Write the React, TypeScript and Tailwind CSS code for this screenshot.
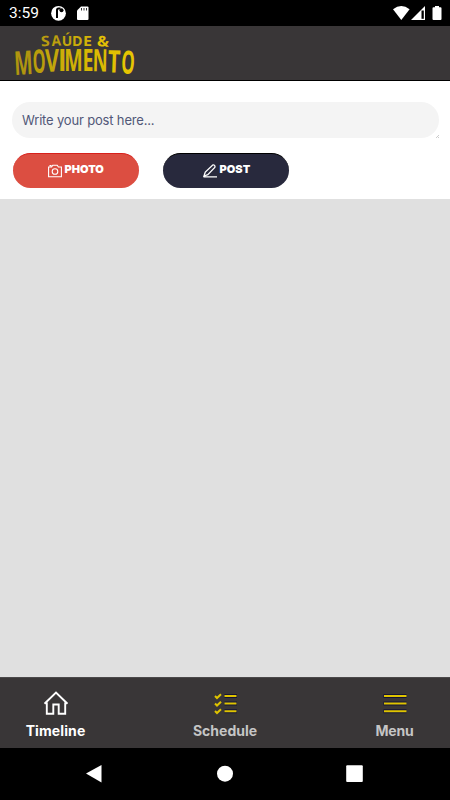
import React from 'react'

interface LogoLetter {
  char: string
  x: number
  y: number
  width: number
  size: number
  rotate: number
  color: string
}

const topLetters: LogoLetter[] = [
  { char: 'S', x: 41.3, y: 46.5, width: 8.8, size: 14.5, rotate: -4, color: '#b99c10' },
  { char: 'A', x: 51.8, y: 46, width: 9.5, size: 14.5, rotate: -3, color: '#bda00e' },
  { char: 'Ú', x: 61.8, y: 45.7, width: 10.5, size: 14.5, rotate: 0, color: '#c5a70c' },
  { char: 'D', x: 72, y: 45.5, width: 10.5, size: 14.5, rotate: 0, color: '#cbac0a' },
  { char: 'E', x: 83, y: 45.5, width: 9, size: 14.5, rotate: 0, color: '#d2b208' },
  { char: '&', x: 96.8, y: 46, width: 12, size: 14.5, rotate: 4, color: '#e2c005' },
]

const bottomLetters: LogoLetter[] = [
  { char: 'M', x: 14.8, y: 75, width: 18.5, size: 33, rotate: -3, color: '#b0950f' },
  { char: 'O', x: 33, y: 73, width: 13, size: 32.5, rotate: -2, color: '#b99d0c' },
  { char: 'V', x: 45.3, y: 71.8, width: 14, size: 31.5, rotate: -1, color: '#c3a60a' },
  { char: 'I', x: 58, y: 71, width: 8.5, size: 31, rotate: 0, color: '#ccad08' },
  { char: 'M', x: 64.3, y: 70.8, width: 18.5, size: 30.5, rotate: 0, color: '#d0b106' },
  { char: 'E', x: 82.5, y: 70.8, width: 11, size: 30.5, rotate: 0, color: '#d7b704' },
  { char: 'N', x: 92.5, y: 71.3, width: 15, size: 31, rotate: 1, color: '#dbbb03' },
  { char: 'T', x: 107.5, y: 72.2, width: 12.5, size: 31, rotate: 2, color: '#e1c002' },
  { char: 'O', x: 120.7, y: 73.2, width: 13.5, size: 32, rotate: 3, color: '#e6c502' },
]

function Letter({ char, x, y, width, size, rotate, color }: LogoLetter) {
  return (
    <text
      transform={`translate(${x} ${y}) rotate(${rotate})`}
      fontSize={size}
      textLength={width}
      lengthAdjust="spacingAndGlyphs"
      fill={color}
    >
      {char}
    </text>
  )
}

function Logo() {
  return (
    <svg className="h-[54px] w-[140px] overflow-visible" viewBox="0 26 140 54">
      <g fontFamily="Open Sans, sans-serif" fontWeight="700">
        {topLetters.map((letter) => (
          <Letter key={letter.x} {...letter} />
        ))}
        {bottomLetters.map((letter) => (
          <Letter key={letter.x} {...letter} />
        ))}
      </g>
    </svg>
  )
}

function StatusBar() {
  return (
    <div className="flex h-[26px] shrink-0 items-center bg-black pl-[9px] text-white">
      <span className="w-[42px] pt-0.5 font-[Roboto] text-[15.5px] leading-none">3:59</span>
      <svg className="h-[26px] w-10" viewBox="51 0 40 26">
        <circle cx="58.5" cy="13.3" r="7.4" fill="#fff" />
        <path d="M57 18V10q0-1.500 1.500-1.500h2" fill="none" stroke="#000" strokeWidth="2" />
        <circle cx="61.5" cy="10.3" r="2" fill="#000" />
        <path d="M81 6.500h6.500a1 1 0 0 1 1 1V19a1 1 0 0 1-1 1H78a1 1 0 0 1-1-1v-8.500z" fill="#fff" />
        <path d="M81.500 8v2.500M84 8v2.500M86.500 8v2.500" stroke="#000" strokeWidth="0.8" />
      </svg>
      <svg className="ml-auto h-[26px] w-[60px]" viewBox="390 0 60 26" fill="#fff">
        <path d="M393 9.300q8.300-6.500 16.600 0L401.300 20z" />
        <path d="M425 6v14h-14z" />
        <path d="M421.500 10.500h2.300v8.300h-2.300z" fill="#000" />
        <path d="M435 6h4v1.300h1.500a1 1 0 0 1 1 1V19a1 1 0 0 1-1 1h-7a1 1 0 0 1-1-1V8.300a1 1 0 0 1 1-1H435z" />
      </svg>
    </div>
  )
}

function PostForm() {
  return (
    <div className="h-[118px] shrink-0 bg-white px-3 pt-[21px]">
      <div className="relative mr-[-1px] flex h-9 items-center rounded-full bg-[#f4f4f4] pl-2.5">
        <span className="pt-px text-[13px] tracking-[-0.17px] text-[#515878]">Write your post here...</span>
        <svg className="absolute right-0 bottom-0 size-1" viewBox="0 0 4 4">
          <path d="M1 4L4 1M3 4l1-1" stroke="#999" strokeWidth="0.5" />
        </svg>
      </div>
      <div className="mt-[15px] ml-px flex gap-6">
        <button className="flex h-[35px] w-[126.4px] items-center justify-center gap-[3px] rounded-full border-t border-[#d8201b] bg-[#dc4e41] pr-px pb-[3px] text-[11px] font-black text-white">
          <svg className="mt-0.5 size-3.5" viewBox="0 0 14 14" fill="none" stroke="currentColor" strokeWidth="1.1">
            <path d="M.6 3h3L4.800 1.200h4.400l1.200 1.800h3v9.700H.6zM1.500 1.600h2" />
            <circle cx="7" cy="7.500" r="2.800" />
          </svg>
          PHOTO
        </button>
        <button className="flex h-[35px] w-[126px] items-center justify-center gap-[3px] rounded-full border-t border-black bg-[#28293d] pb-[3px] text-[11px] font-black text-white">
          <svg className="mt-0.5 size-3.5" viewBox="0 0 14 14" fill="none" stroke="currentColor" strokeWidth="1.3">
            <path d="M.5 12.800H14M1 12l1.300-4L9.500 1.200q1.200-.6 2 .2t.3 2L4.800 10.600z" />
          </svg>
          POST
        </button>
      </div>
    </div>
  )
}

function TabBar() {
  return (
    <div className="flex h-[71px] shrink-0 justify-between border-t border-[#4b494a] bg-[#393637] text-[14px] font-bold text-[#c5c5c5]">
      <div className="flex w-[111px] flex-col items-center pt-3 text-white">
        <svg className="h-[27px] w-[26px]" viewBox="0 0 26 27" fill="none" stroke="currentColor" strokeWidth="1.9">
          <path d="M1.500 13.800L13 2.500l11.500 11.300M3.800 12.500V23.700h6.500V14.500h5.400v9.200H22.200V12.500" />
        </svg>
        <span className="mt-1 leading-5 tracking-[0.1px]">Timeline</span>
      </div>
      <div className="flex w-[111px] flex-col items-center pt-3">
        <svg className="h-[27px] w-6" viewBox="0 0 24 27" fill="none" stroke="#dfc400" strokeWidth="2">
          <path d="M11.500 6h12.500M11.500 13.600h12.500M11.500 21.200h12.500" stroke="#151536" strokeWidth="4" />
          <path d="M2 6l2 2L8 4.200M2 13.500l2 2 4-3.800M2 21l2 2 4-3.800M11.500 6h12M11.500 13.600h12M11.500 21.200h12" />
        </svg>
        <span className="mt-1 leading-5">Schedule</span>
      </div>
      <div className="flex w-[111px] flex-col items-center pt-3">
        <svg className="h-[27px] w-6" viewBox="0 0 24 27" fill="none" stroke="#dfc400" strokeWidth="2">
          <path d="M.5 6h23M.5 13.600h23M.5 21.200h23" stroke="#151536" strokeWidth="4" />
          <path d="M1 6h22.500M1 13.600h22.500M1 21.200h22.500" />
        </svg>
        <span className="mt-1 leading-5 tracking-[-0.2px]">Menu</span>
      </div>
    </div>
  )
}

export default function App() {
  return (
    <div className="flex h-[800px] w-[450px] flex-col overflow-hidden bg-[#e0e0e0] font-[Inter,sans-serif]">
      <StatusBar />
      <header className="h-[55px] shrink-0 border-b border-black bg-[#393637]">
        <Logo />
      </header>
      <PostForm />
      <main className="flex-1" />
      <TabBar />
      {/* Android navigation */}
      <div className="h-[52px] shrink-0 bg-black">
        <svg className="h-[52px] w-[450px]" viewBox="0 748 450 52" fill="#fff">
          <path d="M86 773.500L101.500 765v17.500z" />
          <circle cx="225" cy="773.700" r="8" />
          <rect x="346.200" y="765.300" width="16.600" height="16.600" rx="1" />
        </svg>
      </div>
    </div>
  )
}
